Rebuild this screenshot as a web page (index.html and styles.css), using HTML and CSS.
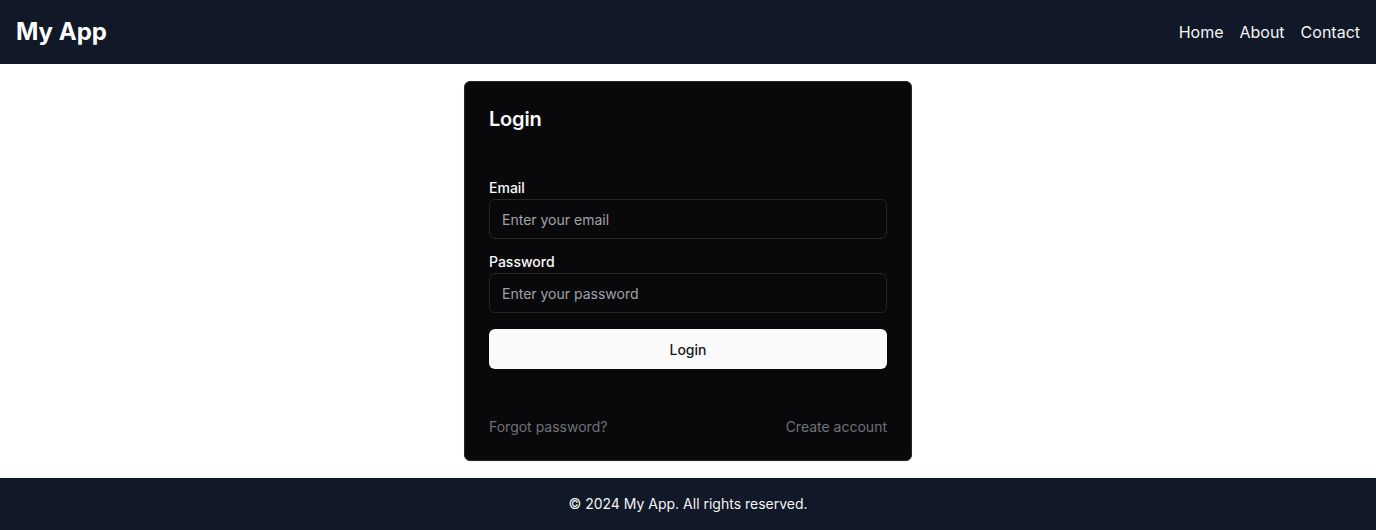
FILE: index.html
```html
<!DOCTYPE html>
<html lang="en">
<head>
<meta charset="utf-8">
<title>My App</title>
<link rel="stylesheet" href="styles.css">
</head>
<body>
<header class="topbar">
  <a class="brand" href="#">My App</a>
  <nav class="nav">
    <a href="#">Home</a>
    <a href="#">About</a>
    <a href="#">Contact</a>
  </nav>
</header>
<main class="main">
  <div class="card">
    <div class="card-header">
      <h2 class="card-title">Login</h2>
    </div>
    <form class="card-content">
      <div class="field">
        <label class="label" for="email">Email</label>
        <input class="input" id="email" type="email" placeholder="Enter your email">
      </div>
      <div class="field">
        <label class="label" for="password">Password</label>
        <input class="input" id="password" type="password" placeholder="Enter your password">
      </div>
      <button class="btn" type="button">Login</button>
    </form>
    <div class="card-footer">
      <a href="#" class="muted-link">Forgot password?</a>
      <a href="#" class="muted-link">Create account</a>
    </div>
  </div>
</main>
<footer class="footer">© 2024 My App. All rights reserved.</footer>
</body>
</html>
```
FILE: styles.css
```css
* { box-sizing: border-box; }
html, body { margin: 0; padding: 0; }
body {
  font-family: Inter, "Liberation Sans", sans-serif;
  min-height: 100vh;
  display: flex;
  flex-direction: column;
  background: #ffffff;
}
a { text-decoration: none; color: inherit; }

.topbar {
  height: 64px;
  background: #111827;
  display: flex;
  align-items: center;
  justify-content: space-between;
  padding: 0 16px;
}
.brand {
  color: #ffffff;
  font-size: 24px;
  font-weight: 700;
  line-height: 32px;
}
.nav {
  display: flex;
  gap: 16px;
}
.nav a {
  color: #f3f4f6;
  font-size: 16px;
  line-height: 24px;
}

.main {
  flex: 1;
  display: flex;
  justify-content: center;
  align-items: flex-start;
  padding: 17px 16px 16px;
}
.card {
  width: 448px;
  background: #09090b;
  border: 1px solid #27272a;
  border-radius: 6px;
  color: #fafafa;
  box-shadow: 0 1px 2px rgba(0, 0, 0, 0.05);
}
.card-header {
  padding: 23px 24px 0;
}
.card-title {
  margin: 0;
  font-size: 20px;
  line-height: 28px;
  font-weight: 600;
  letter-spacing: -0.2px;
}
.card-content {
  padding: 48px 24px 24px;
  margin: 0;
  display: flex;
  flex-direction: column;
  gap: 16px;
}
.field {
  display: flex;
  flex-direction: column;
  gap: 4px;
}
.label {
  font-size: 14px;
  line-height: 14px;
  font-weight: 500;
  color: #fafafa;
}
.input {
  height: 40px;
  width: 100%;
  background: #09090b;
  border: 1px solid #27272a;
  border-radius: 6px;
  padding: 0 12px;
  font-family: inherit;
  font-size: 14px;
  color: #fafafa;
  outline: none;
}
.input::placeholder { color: #a1a1aa; }
.btn {
  height: 40px;
  width: 100%;
  background: #fafafa;
  color: #18181b;
  border: none;
  border-radius: 6px;
  font-family: inherit;
  font-size: 14px;
  font-weight: 500;
  cursor: pointer;
}
.card-footer {
  padding: 24px 24px 23px;
  display: flex;
  justify-content: space-between;
  font-size: 14px;
  line-height: 20px;
}
.muted-link { color: #71717a; }

.footer {
  background: #111827;
  color: #f3f4f6;
  text-align: center;
  font-size: 14px;
  line-height: 20px;
  padding: 16px;
}
```
